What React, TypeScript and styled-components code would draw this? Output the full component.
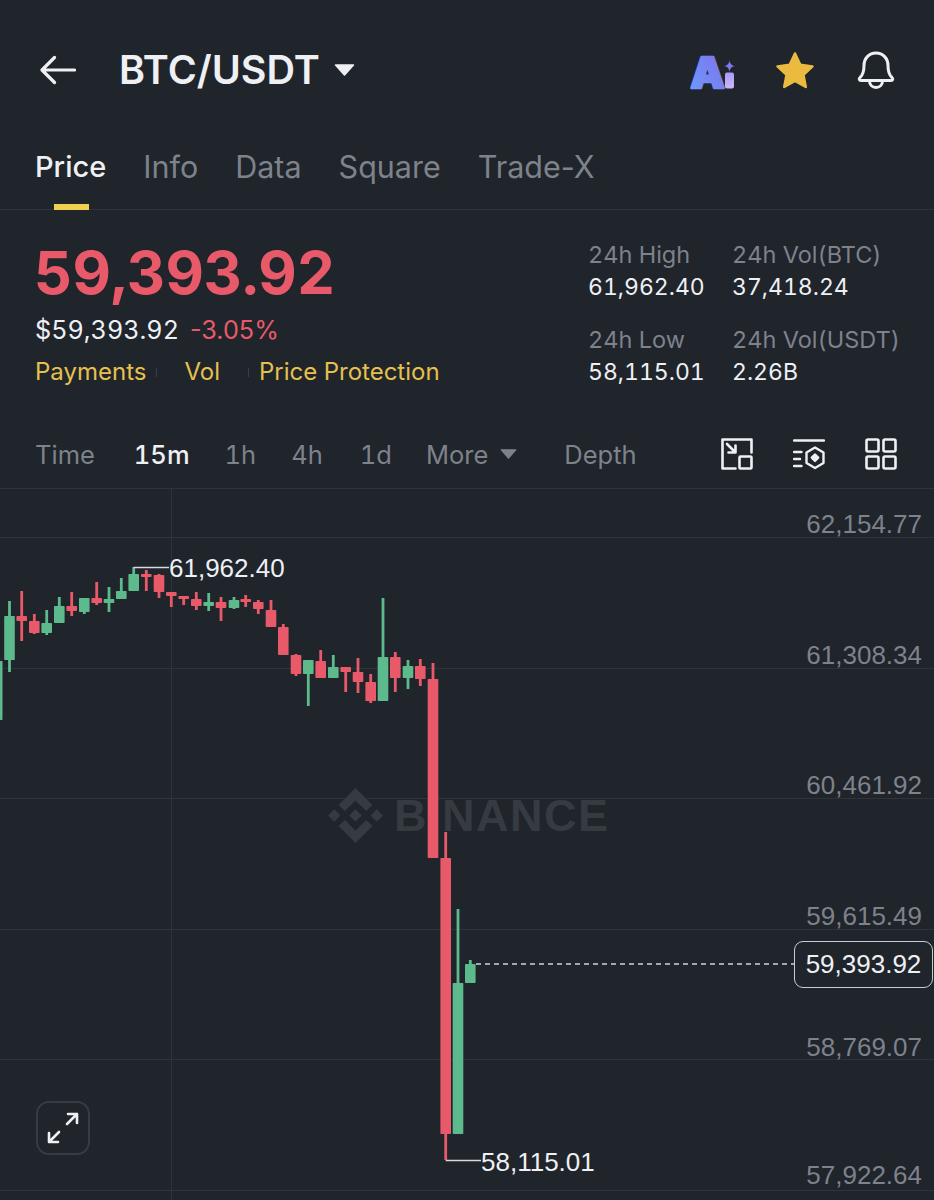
import React from 'react'
import styled, { createGlobalStyle } from 'styled-components'

const GREEN = '#5dba8c'
const RED = '#e85a69'
const YELLOW = '#e6c04e'
const GREY = '#7d828b'
const WHITE = '#eef0f4'
const BG = '#20242b'
const LINE = '#2f343b'

const GlobalStyle = createGlobalStyle`
    html, body {
        margin: 0;
        padding: 0;
        background: ${BG};
    }
    * {
        box-sizing: border-box;
    }
`

const Page = styled.div`
    width: 934px;
    height: 1200px;
    overflow: hidden;
    background: ${BG};
    color: ${WHITE};
    font-family: 'Inter', 'Liberation Sans', sans-serif;
    font-variant-numeric: tabular-nums;
`

const Header = styled.header`
    height: 140px;
    display: flex;
    align-items: center;
    padding: 0 39px 0 40px;
`

const Title = styled.div`
    margin-left: 43px;
    display: flex;
    align-items: center;
    gap: 14px;
    font-size: 39.5px;
    font-weight: 600;
`

const HeaderIcons = styled.div`
    margin-left: auto;
    display: flex;
    align-items: center;
`

const AiSvg = styled.svg`
    margin: -10px 38px -10px 0;
`

const StarSvg = styled.svg`
    margin-right: 42px;
`

const Tabs = styled.nav`
    height: 70px;
    display: flex;
    align-items: center;
    gap: 37px;
    padding: 0 0 17px 35px;
    border-bottom: 1px solid ${LINE};
    font-variant-numeric: normal;
`

const Tab = styled.div<{ $active?: boolean }>`
    position: relative;
    font-size: ${p => (p.$active ? 29 : 30.5)}px;
    font-weight: ${p => (p.$active ? 500 : 400)};
    color: ${p => (p.$active ? WHITE : GREY)};

    ${p =>
        p.$active &&
        `
        &::after {
            content: '';
            position: absolute;
            left: 19px;
            right: 17px;
            bottom: -26px;
            height: 6px;
            background: #f0d050;
        }
    `}
`

const Summary = styled.section`
    height: 210px;
    display: flex;
    justify-content: space-between;
    padding: 22px 36px 0;
`

const PriceBlock = styled.div`
    display: flex;
    flex-direction: column;
    margin-left: -1px;
`

const BigPrice = styled.div`
    font-size: 59.5px;
    line-height: 80px;
    font-weight: 700;
    margin-left: -1px;
    color: ${RED};
`

const FiatRow = styled.div`
    display: flex;
    gap: 11px;
    font-size: 25.2px;
    line-height: 36px;
`

const Change = styled.span`
    color: ${RED};
    font-variant-numeric: normal;
`

const LinkRow = styled.div`
    display: flex;
    align-items: center;
    margin-top: 7px;
    font-size: 24px;
    line-height: 34px;
    color: ${YELLOW};
`

const LinkSep = styled.span<{ $left: number; $right: number }>`
    width: 1px;
    height: 9px;
    background: #3a3e44;
    margin: 0 ${p => p.$right}px 0 ${p => p.$left}px;
`

const Stats = styled.div`
    display: grid;
    grid-template-columns: 144px 165px;
    grid-auto-rows: 85px;
    margin: 6px 1px 0 0;
`

const Stat = styled.div`
    display: flex;
    flex-direction: column;
`

const StatLabel = styled.div`
    font-size: 23.5px;
    line-height: 33px;
    color: ${GREY};
    white-space: nowrap;
`

const StatValue = styled.div`
    font-size: 23px;
    line-height: 33px;
    color: ${WHITE};
    white-space: nowrap;
`

const Toolbar = styled.div`
    height: 69px;
    display: flex;
    align-items: center;
    padding: 0 37px 0 35px;
    border-bottom: 1px solid ${LINE};
`

const Interval = styled.div<{ $active?: boolean; $gap: number }>`
    display: flex;
    align-items: center;
    gap: 12px;
    margin-right: ${p => p.$gap}px;
    font-size: 25.5px;
    font-weight: ${p => (p.$active ? 500 : 400)};
    color: ${p => (p.$active ? WHITE : GREY)};
`

const ToolIcons = styled.div`
    margin-left: auto;
    display: flex;
    align-items: center;
    gap: 40px;
`

const Chart = styled.div`
    position: relative;
    height: 711px;
`

const GridRow = styled.div<{ $height: number; $lift: number }>`
    height: ${p => p.$height}px;
    display: flex;
    align-items: flex-end;
    justify-content: flex-end;
    padding: 0 12px ${p => p.$lift}px 0;
    border-bottom: 1px solid ${LINE};
    font-family: 'Liberation Sans', Arial, sans-serif;
    font-size: 26px;
    line-height: 24px;
    color: ${GREY};
`

const VerticalLine = styled.div`
    position: absolute;
    left: 171px;
    top: 0;
    bottom: 0;
    width: 1px;
    background: ${LINE};
`

const Watermark = styled.div`
    position: absolute;
    left: 328px;
    top: 299px;
    display: flex;
    align-items: center;
    gap: 11px;
    color: #363b42;
    font-family: 'Liberation Sans', Arial, sans-serif;
    font-size: 45px;
    font-weight: 700;
    letter-spacing: 1.5px;
`

const Plot = styled.svg`
    position: absolute;
    inset: 0;
`

const ExtremeLabel = styled.div<{ $left: number; $top: number }>`
    position: absolute;
    left: ${p => p.$left}px;
    top: ${p => p.$top}px;
    font-family: 'Liberation Sans', Arial, sans-serif;
    font-size: 26px;
    line-height: 30px;
    color: ${WHITE};
`

const PriceTag = styled.div`
    position: absolute;
    left: 794px;
    top: 452px;
    width: 139px;
    height: 47px;
    display: flex;
    align-items: center;
    justify-content: center;
    border: 1px solid #c9ccd1;
    border-radius: 9px;
    background: ${BG};
    font-family: 'Liberation Sans', Arial, sans-serif;
    font-size: 26px;
    color: ${WHITE};
`

const ExpandButton = styled.div`
    position: absolute;
    left: 36px;
    top: 612px;
    width: 54px;
    height: 54px;
    display: flex;
    align-items: center;
    justify-content: center;
    border: 2px solid #373b43;
    border-radius: 13px;
`

// x, wick top, wick bottom, body top, body bottom, up
type Candle = [number, number, number, number, number, boolean]

const candles: Candle[] = [
    [-2.8, 655, 720, 661, 720, true],
    [9.5, 601, 672, 616, 660, true],
    [21.7, 591, 641, 616, 621, false],
    [34.3, 614, 634, 621, 633, false],
    [46.7, 610, 635, 623, 633, true],
    [59.3, 597, 623, 606, 623, true],
    [71.7, 592, 616, 606, 611, false],
    [84.3, 598, 614, 598, 612, true],
    [96.7, 582, 605, 598, 603, false],
    [109, 587, 612, 599, 603, true],
    [121.3, 578, 599, 591, 599, true],
    [133.7, 567, 591, 574, 591, true],
    [146.3, 570, 591, 574, 577, false],
    [159, 574, 598, 575, 592, false],
    [171.3, 592, 607, 592, 596, false],
    [183.7, 596, 605, 596, 599, false],
    [196.3, 592, 610, 599, 606, false],
    [208.7, 593, 611, 602, 606, true],
    [221, 597, 621, 602, 608, false],
    [234, 597, 609, 600, 608, true],
    [245.7, 595, 607, 599, 602, false],
    [258.3, 600, 614, 602, 609, false],
    [271, 600, 627, 610, 627, false],
    [283.3, 624, 655, 627, 655, false],
    [296, 654, 676, 655, 674, false],
    [308.3, 660, 706, 660, 674, true],
    [320.7, 650, 678, 661, 678, false],
    [333.3, 655, 678, 667, 678, true],
    [345.7, 667, 692, 667, 672, false],
    [358, 658, 693, 672, 682, false],
    [370.7, 674, 703, 682, 701, false],
    [383, 598, 701, 657, 701, true],
    [395.3, 652, 692, 657, 678, false],
    [408, 660, 689, 666, 678, true],
    [420.3, 659, 686, 666, 679, false],
    [433, 663, 858, 679, 858, false],
    [445.7, 832, 1160, 858, 1134, false],
    [458, 909, 1134, 983, 1134, true],
    [470.3, 960, 983, 964, 983, true],
]

const axisRows: [number, string, number][] = [
    [49, '62,154.77', 1],
    [130.6, '61,308.34', 1],
    [130.6, '60,461.92', 1],
    [130.6, '59,615.49', 1],
    [130.6, '58,769.07', 0],
    [130.6, '57,922.64', 3],
]

const BackIcon = () => (
    <svg width="36" height="30" viewBox="0 0 36 30" fill="none" stroke={WHITE} strokeWidth="3.2" strokeLinecap="round" strokeLinejoin="round">
        <path d="M34.5 15H2.5M14.5 2.5 2 15l12.5 12.5" />
    </svg>
)

const Caret = ({ width, height, color }: { width: number; height: number; color: string }) => (
    <svg width={width} height={height} viewBox="0 0 20 12" preserveAspectRatio="none">
        <path d="M1.5 1h17L10 11z" fill={color} stroke={color} strokeWidth="1.5" strokeLinejoin="round" />
    </svg>
)

const AiIcon = () => (
    <AiSvg width="47" height="58" viewBox="0 0 47 58">
        <defs>
            <linearGradient id="aiA" x1="0" y1="1" x2="1" y2="0">
                <stop offset="0" stopColor="#6f9bff" />
                <stop offset="1" stopColor="#7d6fe8" />
            </linearGradient>
            <linearGradient id="aiI" x1="0" y1="0" x2="0" y2="1">
                <stop offset="0" stopColor="#a79cf5" />
                <stop offset="1" stopColor="#c8b8fb" />
            </linearGradient>
        </defs>
        <text x="0.5" y="47" fontFamily="Inter, sans-serif" fontSize="43" fontWeight="900" fill="url(#aiA)" stroke="url(#aiA)" strokeWidth="2.5" strokeLinejoin="round">
            A
        </text>
        <rect x="35" y="31.5" width="9" height="16" rx="2" fill="url(#aiI)" />
        <path d="M39.5 19.5c.6 3.200 2 4.900 5.200 5.600-3.200.7-4.600 2.400-5.200 5.600-.6-3.200-2-4.900-5.200-5.600 3.200-.7 4.600-2.400 5.200-5.600z" fill="#7c78ee" />
    </AiSvg>
)

const StarIcon = () => (
    <StarSvg width="40" height="38" viewBox="0 0 40 38">
        <path
            d="M20 2.500l5.300 11.300 12.200 1.600-9 8.500 2.300 12.100L20 30l-10.800 6 2.300-12.100-9-8.500 12.200-1.600z"
            fill="#eabb3f"
            stroke="#eabb3f"
            strokeWidth="2.500"
            strokeLinejoin="round"
        />
    </StarSvg>
)

const BellIcon = () => (
    <svg width="38" height="38" viewBox="0 0 38 38" fill="none" stroke={WHITE} strokeWidth="3" strokeLinecap="round" strokeLinejoin="round">
        <path d="M3 26.500C6.500 23.500 7 20 7 14.500 7 7.500 12 2 19 2s12 5.500 12 12.500c0 5.500.5 9 4 12 1.300 1.200.8 3-1 3H4c-1.800 0-2.300-1.800-1-3z" />
        <path d="M12.500 30c0 4 3 6.500 6.500 6.500s6.500-2.500 6.500-6.500" />
    </svg>
)

const ResizeIcon = () => (
    <svg width="32" height="32" viewBox="0 0 32 32" fill="none" stroke={WHITE} strokeWidth="2.600" strokeLinecap="round" strokeLinejoin="round">
        <path d="M14.500 30.500H1.500v-29h29v13" />
        <rect x="18.500" y="18.500" width="12" height="12" rx="1" />
        <path d="M6 6l8 8M14.500 7.500v7h-7" />
    </svg>
)

const DepthIcon = () => (
    <svg width="32" height="32" viewBox="0 0 32 32" fill="none" stroke={WHITE} strokeWidth="2.400" strokeLinecap="round" strokeLinejoin="round">
        <path d="M1 2.500h30M1 14h7.500M1 21h6M1 28h7.500" />
        <path d="M22 9.500l8.500 5v10.500L22 30l-8.500-5V14.500z" />
        <path d="M22 16.500l3.200 3.200-3.200 3.200-3.200-3.200z" fill={WHITE} />
    </svg>
)

const GridIcon = () => (
    <svg width="32" height="32" viewBox="0 0 32 32" fill="none" stroke={WHITE} strokeWidth="2.600" strokeLinejoin="round">
        <rect x="1.500" y="1.500" width="12" height="12" rx="1.500" />
        <rect x="18.500" y="1.500" width="12" height="12" rx="1.500" />
        <rect x="1.500" y="18.500" width="12" height="12" rx="1.500" />
        <rect x="18.500" y="18.500" width="12" height="12" rx="1.500" />
    </svg>
)

const BinanceLogo = () => (
    <svg width="55" height="55" viewBox="0 0 126.610 126.610" fill="#363b42">
        <path d="M38.730 53.200l24.590-24.580 24.600 24.600 14.300-14.310L63.320 0 24.430 38.900zM0 63.310l14.300-14.310 14.310 14.310-14.310 14.300zM38.730 73.410l24.590 24.590 24.600-24.600 14.310 14.290-38.900 38.910-38.910-38.880-.02-.02zM98 63.310l14.300-14.310 14.310 14.300-14.310 14.320zM77.830 63.300L63.320 48.780 52.590 59.510l-1.240 1.230-2.540 2.540 14.510 14.500 14.510-14.470z" />
    </svg>
)

const ExpandIcon = () => (
    <svg width="34" height="34" viewBox="0 0 34 34" fill="none" stroke={WHITE} strokeWidth="2.600" strokeLinecap="round" strokeLinejoin="round">
        <path d="M3 31 13 21M3 22v9h9M31 3 21 13M22 3h9v9" />
    </svg>
)

export default function App() {
    return (
        <Page>
            <GlobalStyle />
            <Header>
                <BackIcon />
                <Title>
                    BTC/USDT
                    <Caret width={21} height={12} color={WHITE} />
                </Title>
                <HeaderIcons>
                    <AiIcon />
                    <StarIcon />
                    <BellIcon />
                </HeaderIcons>
            </Header>
            <Tabs>
                <Tab $active>Price</Tab>
                <Tab>Info</Tab>
                <Tab>Data</Tab>
                <Tab>Square</Tab>
                <Tab>Trade-X</Tab>
            </Tabs>
            <Summary>
                <PriceBlock>
                    <BigPrice>59,393.92</BigPrice>
                    <FiatRow>
                        <span>$59,393.92</span>
                        <Change>-3.05%</Change>
                    </FiatRow>
                    <LinkRow>
                        <span>Payments</span>
                        <LinkSep $left={10} $right={27} />
                        <span>Vol</span>
                        <LinkSep $left={28} $right={10} />
                        <span>Price Protection</span>
                    </LinkRow>
                </PriceBlock>
                <Stats>
                    <Stat>
                        <StatLabel>24h High</StatLabel>
                        <StatValue>61,962.40</StatValue>
                    </Stat>
                    <Stat>
                        <StatLabel>24h Vol(BTC)</StatLabel>
                        <StatValue>37,418.24</StatValue>
                    </Stat>
                    <Stat>
                        <StatLabel>24h Low</StatLabel>
                        <StatValue>58,115.01</StatValue>
                    </Stat>
                    <Stat>
                        <StatLabel>24h Vol(USDT)</StatLabel>
                        <StatValue>2.26B</StatValue>
                    </Stat>
                </Stats>
            </Summary>
            <Toolbar>
                <Interval $gap={39}>Time</Interval>
                <Interval $active $gap={35}>15m</Interval>
                <Interval $gap={35}>1h</Interval>
                <Interval $gap={37}>4h</Interval>
                <Interval $gap={34}>1d</Interval>
                <Interval $gap={47}>
                    More
                    <Caret width={17} height={10} color={GREY} />
                </Interval>
                <Interval $gap={0}>Depth</Interval>
                <ToolIcons>
                    <ResizeIcon />
                    <DepthIcon />
                    <GridIcon />
                </ToolIcons>
            </Toolbar>
            <Chart>
                {axisRows.map(([height, label, lift]) => (
                    <GridRow key={label} $height={height} $lift={lift}>
                        {label}
                    </GridRow>
                ))}
                <VerticalLine />
                <Watermark>
                    <BinanceLogo />
                    BINANCE
                </Watermark>
                <Plot width="934" height="711" viewBox="0 489 934 711">
                    {candles.map(([x, wickTop, wickBottom, bodyTop, bodyBottom, up]) => {
                        const color = up ? GREEN : RED
                        return (
                            <g key={x} fill={color}>
                                <rect x={x - 1.4} y={wickTop} width="2.800" height={wickBottom - wickTop} />
                                <rect x={x - 5.3} y={bodyTop} width="10.600" height={bodyBottom - bodyTop} rx="0.800" />
                            </g>
                        )
                    })}
                    <path d="M133.700 567.500H169" stroke="#d8dade" strokeWidth="1.500" fill="none" />
                    <path d="M445.700 1160.500H481" stroke="#d8dade" strokeWidth="1.500" fill="none" />
                    <path d="M476 964H794" stroke="#cfd2d6" strokeWidth="1.300" strokeDasharray="5 4" fill="none" />
                </Plot>
                <ExtremeLabel $left={169} $top={64}>61,962.40</ExtremeLabel>
                <ExtremeLabel $left={481} $top={658}>58,115.01</ExtremeLabel>
                <PriceTag>59,393.92</PriceTag>
                <ExpandButton>
                    <ExpandIcon />
                </ExpandButton>
            </Chart>
        </Page>
    )
}
